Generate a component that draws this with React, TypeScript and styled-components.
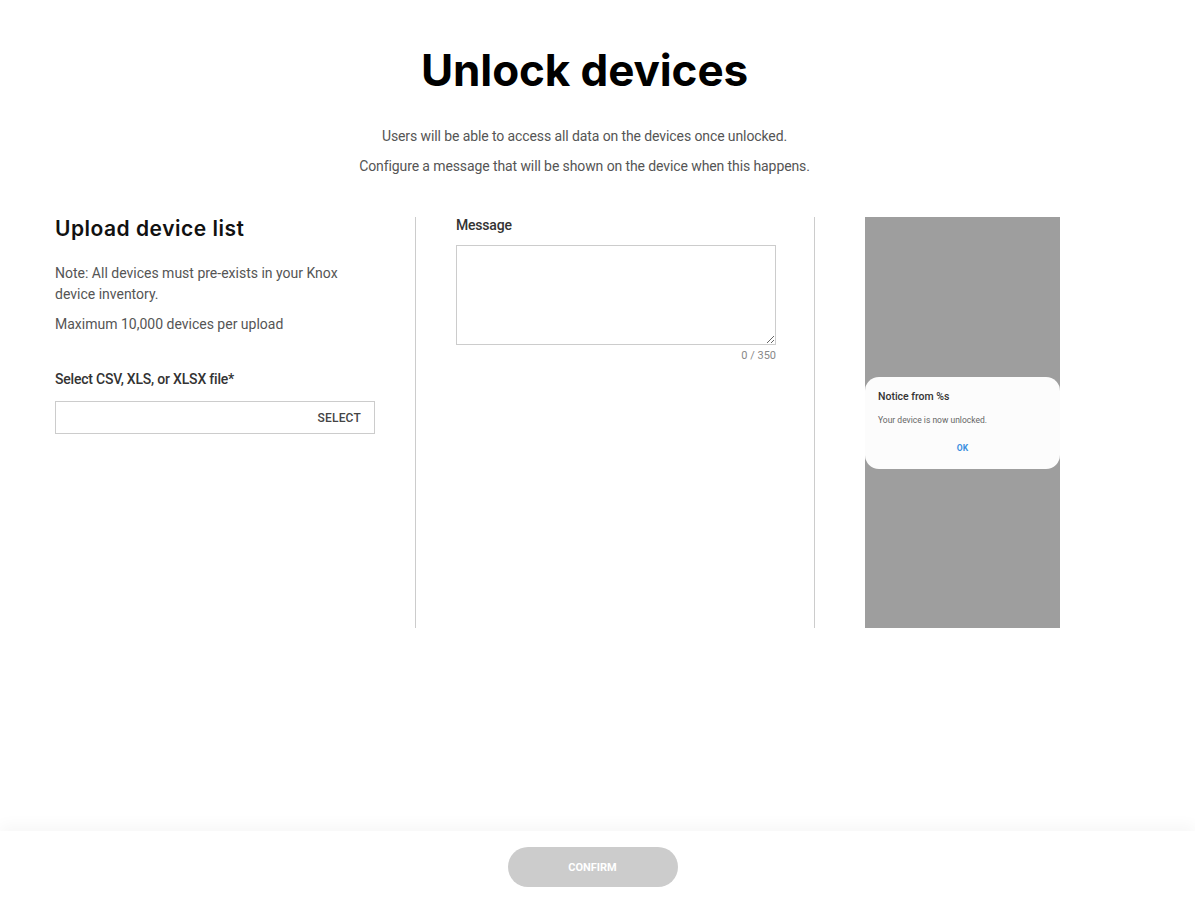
import styled, { createGlobalStyle } from 'styled-components'

const GlobalStyle = createGlobalStyle`
	html, body {
		margin: 0;
		padding: 0;
		background: #ffffff;
	}

	body {
		font-family: Roboto, 'Liberation Sans', sans-serif;
		color: #222222;
	}

	* {
		box-sizing: border-box;
	}
`

const Page = styled.div`
	display: flex;
	flex-direction: column;
	min-height: 100vh;
`

const Main = styled.main`
	flex: 1;
	padding-top: 42px;
`

const Header = styled.header`
	padding-right: 26px;
`

const Title = styled.h1`
	margin: 0;
	text-align: center;
	font-family: Inter, 'DejaVu Sans', sans-serif;
	font-size: 44px;
	font-weight: 700;
	letter-spacing: -0.1px;
	line-height: 56px;
	color: #000000;
`

const Intro = styled.div`
	margin-top: 28px;
	display: flex;
	flex-direction: column;
	align-items: center;
	gap: 9px;
`

const IntroLine = styled.p`
	margin: 0;
	font-size: 14px;
	line-height: 21px;
	letter-spacing: -0.1px;
	color: #555555;
`

const Columns = styled.div`
	display: flex;
	margin: 40px 0 0 55px;
	height: 411px;
`

const Column = styled.section<{ width: number; padLeft: number; padRight: number; divider?: boolean }>`
	width: ${(props) => props.width + props.padLeft + props.padRight + (props.divider ? 1 : 0)}px;
	padding: 0 ${(props) => props.padRight}px 0 ${(props) => props.padLeft}px;
	border-right: ${(props) => (props.divider ? '1px solid #cccccc' : 'none')};
	flex-shrink: 0;
`

const Heading = styled.h2`
	margin: 0;
	font-family: Inter, 'DejaVu Sans', sans-serif;
	font-size: 21px;
	font-weight: 600;
	letter-spacing: 0.5px;
	line-height: 24px;
	color: #111111;
`

const Note = styled.p`
	margin: 0;
	font-size: 14px;
	line-height: 21px;
	color: #555555;

	& + & {
		margin-top: 9px;
	}
`

const Notes = styled.div`
	margin-top: 22px;
`

const FieldLabel = styled.label<{ top?: number }>`
	display: block;
	margin-top: ${(props) => props.top ?? 0}px;
	font-size: 14px;
	font-weight: 500;
	line-height: 16px;
	letter-spacing: -0.2px;
	color: #333333;
`

const FileBox = styled.div`
	display: flex;
	align-items: center;
	justify-content: flex-end;
	margin-top: 14px;
	height: 33px;
	padding: 0 13px;
	border: 1px solid #cccccc;
	background: #ffffff;
`

const SelectButton = styled.button`
	border: none;
	background: none;
	padding: 0;
	font-family: inherit;
	font-size: 12px;
	font-weight: 500;
	color: #444444;
	letter-spacing: 0.2px;
	cursor: pointer;
`

const MessageArea = styled.textarea`
	display: block;
	width: 100%;
	height: 100px;
	margin-top: 12px;
	border: 1px solid #cccccc;
	font-family: inherit;
	font-size: 14px;
	resize: vertical;
	outline: none;
`

const Counter = styled.div`
	margin-top: 4px;
	text-align: right;
	font-size: 11px;
	color: #888888;
`

const Preview = styled.div`
	width: 195px;
	height: 411px;
	margin-left: 50px;
	background: #9e9e9e;
	display: flex;
	align-items: center;
	flex-shrink: 0;
`

const Dialog = styled.div`
	width: 100%;
	height: 92px;
	padding: 13px 13px 0;
	background: #fcfcfc;
	border-radius: 14px;
	font-family: Roboto, 'Liberation Sans', sans-serif;
`

const DialogTitle = styled.div`
	font-size: 10.5px;
	font-weight: 500;
	color: #333333;
	line-height: 14px;
`

const DialogText = styled.div`
	margin-top: 10px;
	font-size: 8.5px;
	color: #666666;
	line-height: 12px;
`

const DialogAction = styled.div`
	margin-top: 17px;
	text-align: center;
	font-size: 8.5px;
	font-weight: 700;
	color: #3b8fe0;
`

const Footer = styled.footer`
	display: flex;
	justify-content: center;
	height: 66px;
	padding: 16px 10px 0 0;
	background: #ffffff;
	box-shadow: 0 -6px 14px rgba(0, 0, 0, 0.035);
`

const ConfirmButton = styled.button`
	width: 170px;
	height: 40px;
	border: none;
	border-radius: 20px;
	background: #cccccc;
	color: #ffffff;
	font-family: Roboto, 'Liberation Sans', sans-serif;
	font-size: 11px;
	font-weight: 700;
	cursor: default;
`

export default function App() {
	return (
		<>
			<GlobalStyle />
			<Page>
				<Main>
					<Header>
						<Title>Unlock devices</Title>
						<Intro>
							<IntroLine>Users will be able to access all data on the devices once unlocked.</IntroLine>
							<IntroLine>Configure a message that will be shown on the device when this happens.</IntroLine>
						</Intro>
					</Header>
					<Columns>
						<Column width={320} padLeft={0} padRight={40} divider>
							<Heading>Upload device list</Heading>
							<Notes>
								<Note>Note: All devices must pre-exists in your Knox device inventory.</Note>
								<Note>Maximum 10,000 devices per upload</Note>
							</Notes>
							<FieldLabel top={36}>Select CSV, XLS, or XLSX file*</FieldLabel>
							<FileBox>
								<SelectButton type="button">SELECT</SelectButton>
							</FileBox>
						</Column>
						<Column width={320} padLeft={40} padRight={38} divider>
							<FieldLabel>Message</FieldLabel>
							<MessageArea />
							<Counter>0 / 350</Counter>
						</Column>
						<Preview>
							<Dialog>
								<DialogTitle>Notice from %s</DialogTitle>
								<DialogText>Your device is now unlocked.</DialogText>
								<DialogAction>OK</DialogAction>
							</Dialog>
						</Preview>
					</Columns>
				</Main>
				<Footer>
					<ConfirmButton type="button" disabled>
						CONFIRM
					</ConfirmButton>
				</Footer>
			</Page>
		</>
	)
}
